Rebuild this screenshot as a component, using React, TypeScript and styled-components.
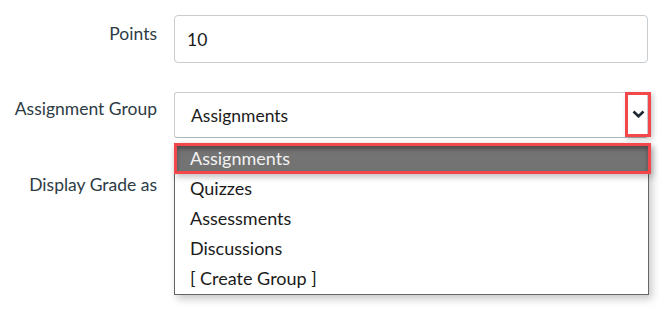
import React from 'react';
import styled, { createGlobalStyle } from 'styled-components';

const GlobalStyle = createGlobalStyle`
  html, body {
    margin: 0;
    padding: 0;
    background: #ffffff;
  }
  body {
    font-family: Lato, "Liberation Sans", sans-serif;
    color: #2d3b45;
  }
`;

const Form = styled.div`
  width: 664px;
  height: 310px;
  padding-top: 15px;
  box-sizing: border-box;
  display: flex;
  flex-direction: column;
  overflow: hidden;
`;

const Row = styled.div<{ $gap?: number }>`
  display: grid;
  grid-template-columns: 157px 475px;
  column-gap: 17px;
  margin-top: ${(p) => p.$gap ?? 0}px;
`;

const Label = styled.div<{ $offset: number }>`
  text-align: right;
  font-size: 17.5px;
  line-height: 24px;
  color: #2d3b45;
  padding-top: ${(p) => p.$offset}px;
`;

const TextInput = styled.div`
  height: 48px;
  box-sizing: border-box;
  border: 1px solid #c7cdd1;
  border-radius: 4px;
  padding: 0 12px;
  display: flex;
  align-items: center;
  font-size: 17.5px;
  color: #1b1b1b;
  width: 474px;
`;

const SelectWrap = styled.div`
  position: relative;
`;

const SelectBox = styled.div`
  height: 46px;
  box-sizing: border-box;
  border: 1px solid #c7cdd1;
  border-bottom-color: #b0b6ba;
  border-radius: 3px;
  padding: 0 16px;
  display: flex;
  align-items: center;
  justify-content: space-between;
  font-size: 17.5px;
  color: #1b1b1b;
  width: 474px;
`;

const Callout = styled.div`
  position: absolute;
  border: 3px solid #f4474b;
  box-sizing: border-box;
  box-shadow: 2px 2px 5px rgba(0, 0, 0, 0.22);
`;

const ChevronBox = styled(Callout)`
  top: 0;
  left: 451px;
  width: 26px;
  height: 45px;
  display: flex;
  align-items: center;
  justify-content: center;
  padding-bottom: 1px;
`;

const Menu = styled.div`
  position: absolute;
  top: 51px;
  left: 0;
  width: 475px;
  height: 152px;
  box-sizing: border-box;
  border: 1px solid #666666;
  background: #ffffff;
  box-shadow: 3px 4px 8px rgba(0, 0, 0, 0.22);
  z-index: 2;
`;

const Option = styled.div<{ $active?: boolean }>`
  height: 30px;
  box-sizing: border-box;
  padding-left: 15px;
  padding-bottom: 2px;
  display: flex;
  align-items: center;
  font-size: 18px;
  color: ${(p) => (p.$active ? '#f2f2f2' : '#1b1b1b')};
  background: ${(p) => (p.$active ? '#737373' : 'transparent')};
  position: relative;
`;

const OptionText = styled.span`
  position: relative;
`;

const ActiveFrame = styled(Callout)`
  top: -1px;
  left: -1px;
  width: 477px;
  height: 31px;
  box-shadow: inset 0 3px 4px rgba(0, 0, 0, 0.35), 2px 3px 6px rgba(0, 0, 0, 0.25);
`;

const options = ['Assignments', 'Quizzes', 'Assessments', 'Discussions', '[ Create Group ]'];

const Chevron = () => (
  <svg width="13" height="8" viewBox="0 0 13 8">
    <path d="M1.5 1.5 L6.5 6.3 L11.5 1.5" fill="none" stroke="#1f2933" strokeWidth="2.6" />
  </svg>
);

export default function App() {
  return (
    <>
      <GlobalStyle />
      <Form>
        <Row>
          <Label $offset={7}>Points</Label>
          <TextInput>10</TextInput>
        </Row>
        <Row $gap={29}>
          <Label $offset={5}>Assignment Group</Label>
          <SelectWrap>
            <SelectBox>Assignments</SelectBox>
            <ChevronBox>
              <Chevron />
            </ChevronBox>
            <Menu>
              {options.map((o, i) => (
                <Option key={o} $active={i === 0}>
                  {i === 0 && <ActiveFrame />}
                  <OptionText>{o}</OptionText>
                </Option>
              ))}
            </Menu>
          </SelectWrap>
        </Row>
        <Row $gap={35}>
          <Label $offset={0}>Display Grade as</Label>
        </Row>
      </Form>
    </>
  );
}
